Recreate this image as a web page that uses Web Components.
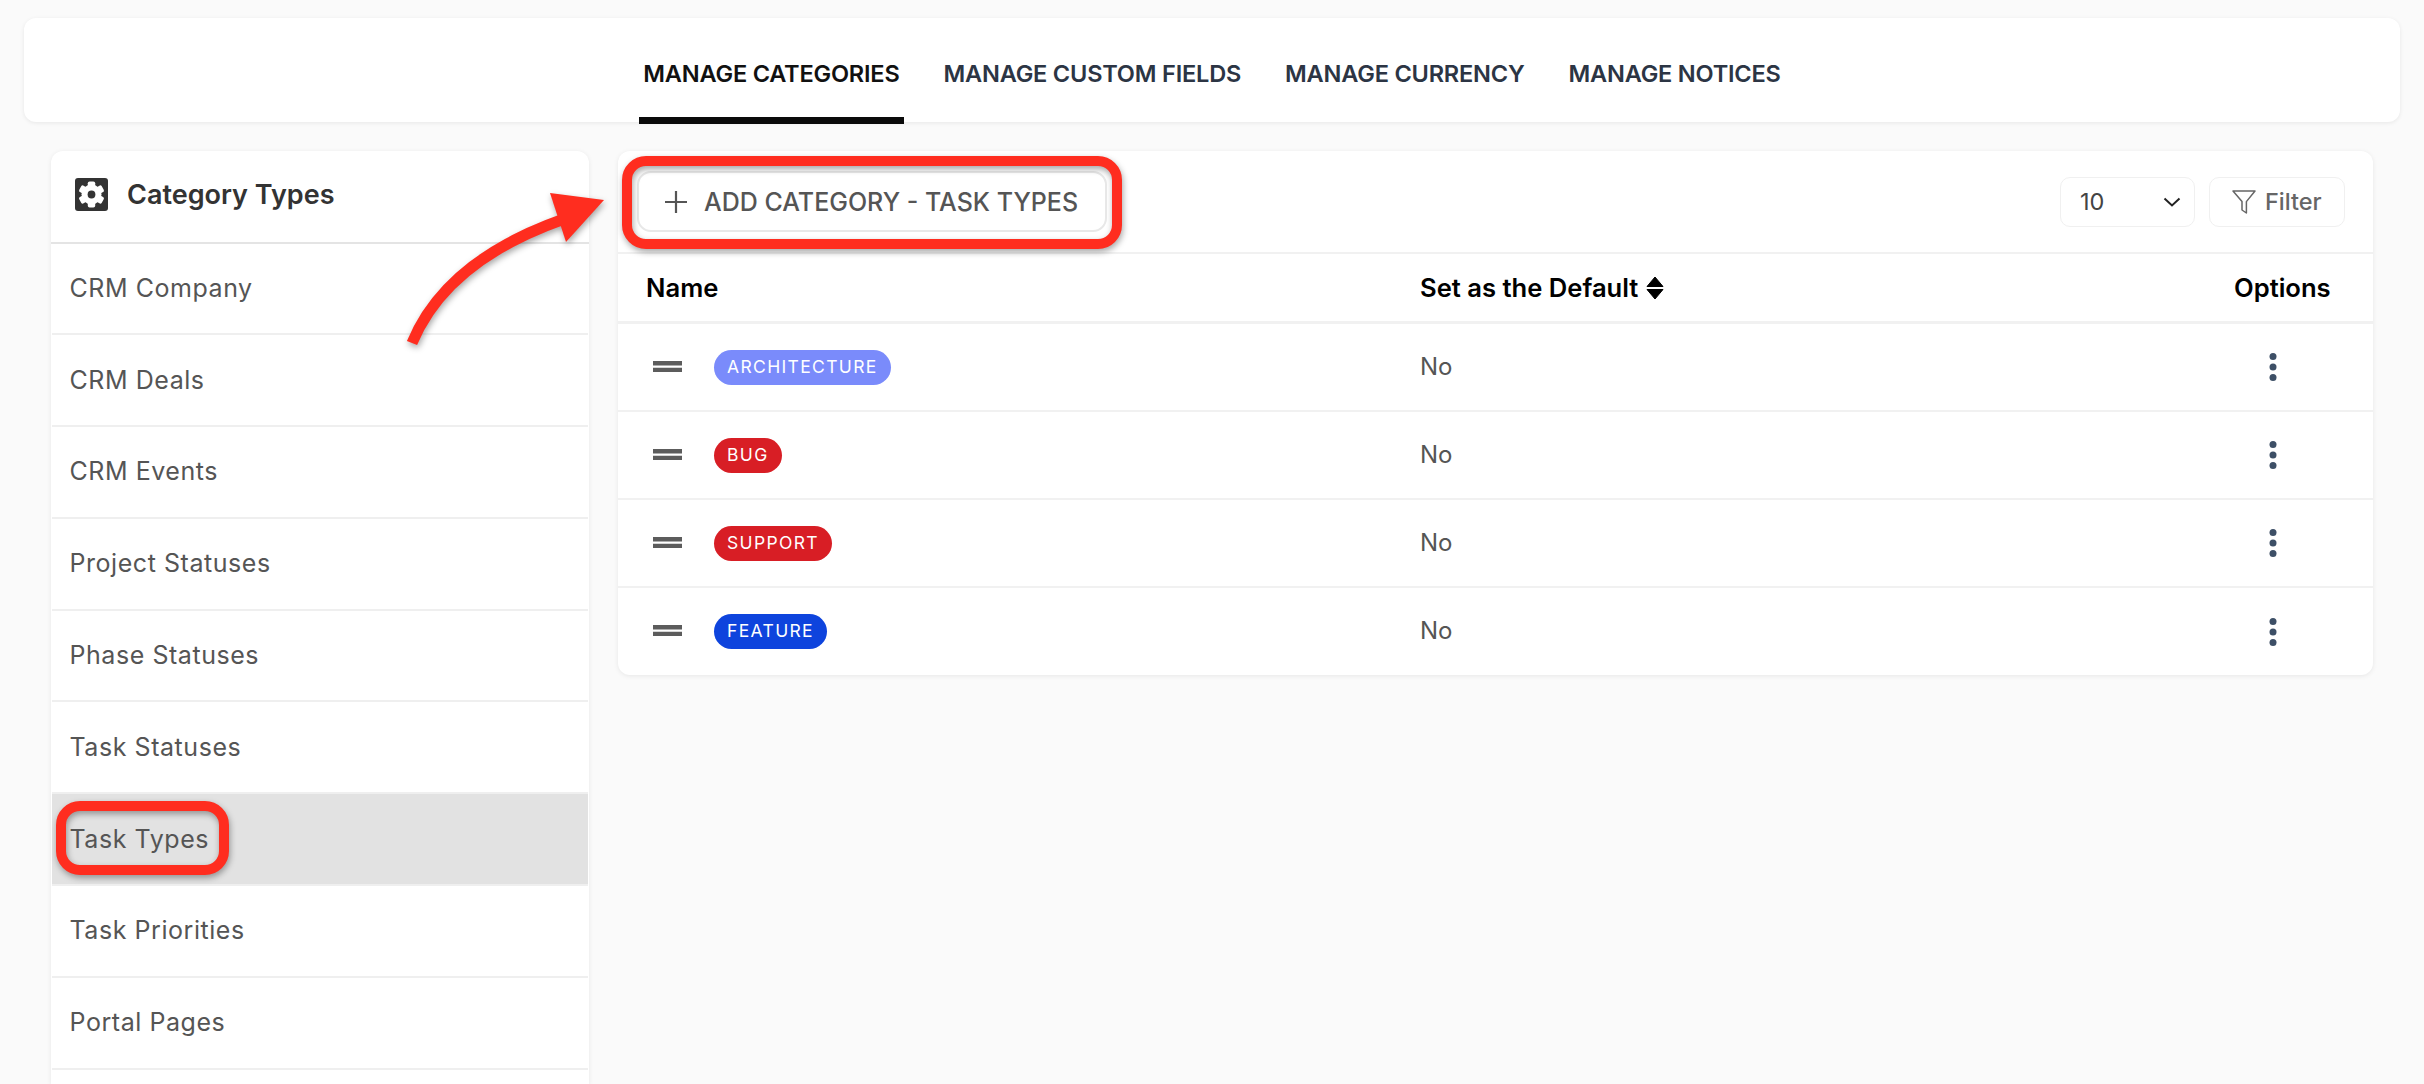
<!DOCTYPE html>
<html>
<head>
<meta charset="utf-8">
<title>Manage Categories</title>
<style>
  html, body { margin: 0; height: 100%; overflow: hidden; }
  body {
    position: relative;
    background: #fafafa;
    font-family: Inter, "Liberation Sans", sans-serif;
    color: #555;
    box-sizing: border-box;
    padding: 18px 24px 0;
  }
</style>
</head>
<body>

<tab-bar>
  <tab-item active>MANAGE CATEGORIES</tab-item>
  <tab-item>MANAGE CUSTOM FIELDS</tab-item>
  <tab-item>MANAGE CURRENCY</tab-item>
  <tab-item>MANAGE NOTICES</tab-item>
</tab-bar>

<page-columns>
  <side-panel slot="side" heading="Category Types">
    <side-item>CRM Company</side-item>
    <side-item>CRM Deals</side-item>
    <side-item>CRM Events</side-item>
    <side-item>Project Statuses</side-item>
    <side-item>Phase Statuses</side-item>
    <side-item>Task Statuses</side-item>
    <side-item active>Task Types</side-item>
    <side-item>Task Priorities</side-item>
    <side-item>Portal Pages</side-item>
  </side-panel>

  <category-table>
    <category-row color="#7a8bfb" default="No">ARCHITECTURE</category-row>
    <category-row color="#d81e25" default="No">BUG</category-row>
    <category-row color="#d81e25" default="No">SUPPORT</category-row>
    <category-row color="#0e44dd" default="No">FEATURE</category-row>
  </category-table>
</page-columns>

<annotation-layer></annotation-layer>

<script>
/* Top tabs */
class TabBar extends HTMLElement {
  constructor() {
    super();
    this.attachShadow({mode: 'open'}).innerHTML = `
      <style>
        :host {
          display: flex;
          justify-content: center;
          height: 104px;
          gap: 36px;
          background: #fff;
          border-radius: 12px;
          box-shadow: 0 1px 4px rgba(0,0,0,.08);
        }
      </style>
      <slot></slot>`;
  }
}
customElements.define('tab-bar', TabBar);

class TabItem extends HTMLElement {
  constructor() {
    super();
    this.attachShadow({mode: 'open'}).innerHTML = `
      <style>
        :host {
          display: block;
          box-sizing: border-box;
          height: 106px;
          padding: 3px 4px 0;
          line-height: 106px;
          font-size: 23.55px;
          font-weight: 600;
          letter-spacing: -0.2px;
          color: #2c3544;
          white-space: nowrap;
          border-bottom: 7px solid transparent;
        }
        :host([active]) { color: #111; border-bottom-color: #0a0a0a; }
      </style>
      <slot></slot>`;
  }
}
customElements.define('tab-item', TabItem);

/* Two column area under the tabs */
class PageColumns extends HTMLElement {
  constructor() {
    super();
    this.attachShadow({mode: 'open'}).innerHTML = `
      <style>
        :host {
          display: grid;
          grid-template-columns: 538px 1fr;
          gap: 29px;
          align-items: start;
          margin: 29px 27px 0;
        }
      </style>
      <slot name="side"></slot>
      <slot></slot>`;
  }
}
customElements.define('page-columns', PageColumns);

/* Left list */
class SidePanel extends HTMLElement {
  constructor() {
    super();
    this.attachShadow({mode: 'open'}).innerHTML = `
      <style>
        :host {
          display: block;
          height: 933px;
          overflow: hidden;
          background: #fff;
          border-radius: 12px 12px 0 0;
          box-shadow: 0 1px 5px rgba(0,0,0,.08);
        }
        header {
          display: flex;
          align-items: center;
          gap: 19px;
          box-sizing: border-box;
          height: 92.5px;
          padding: 0 0 3px 24px;
          border-bottom: 2px solid #e4e4e4;
          font-size: 27px;
          font-weight: 600;
          color: #333;
        }
        svg { display: block; }
      </style>
      <header>
        <svg width="33" height="33" viewBox="0 0 33 33">
          <rect width="33" height="33" rx="3" fill="#333"/>
          <g fill="#fff" transform="translate(16.5 16.5)">
            <circle r="10"/>
            <rect x="-3.7" y="-13" width="7.4" height="26" rx="1.8"/>
            <rect x="-3.7" y="-13" width="7.4" height="26" rx="1.8" transform="rotate(60)"/>
            <rect x="-3.7" y="-13" width="7.4" height="26" rx="1.8" transform="rotate(120)"/>
          </g>
          <circle cx="16.5" cy="16.5" r="3.9" fill="#333"/>
        </svg>
        <span id="title"></span>
      </header>
      <slot></slot>`;
  }

  connectedCallback() {
    this.shadowRoot.querySelector('#title').textContent = this.getAttribute('heading');
  }
}
customElements.define('side-panel', SidePanel);

class SideItem extends HTMLElement {
  constructor() {
    super();
    this.attachShadow({mode: 'open'}).innerHTML = `
      <style>
        :host {
          display: flex;
          align-items: center;
          box-sizing: border-box;
          height: 91.8px;
          margin: 0 1px;
          padding: 0 0 1px 17.5px;
          border-bottom: 2px solid #efefef;
          font-size: 25px;
          letter-spacing: 0.55px;
          color: #555;
        }
        :host([active]) { background: #e2e2e2; }
      </style>
      <slot></slot>`;
  }
}
customElements.define('side-item', SideItem);

/* Right table */
class CategoryTable extends HTMLElement {
  constructor() {
    super();
    this.attachShadow({mode: 'open'}).innerHTML = `
      <style>
        :host {
          display: block;
          background: #fff;
          border-radius: 12px;
          box-shadow: 0 1px 5px rgba(0,0,0,.08);
        }
        .toolbar {
          display: flex;
          align-items: center;
          box-sizing: border-box;
          height: 103px;
          padding: 0 28px 0 19px;
          border-bottom: 2px solid #f1f1f1;
        }
        .add {
          display: flex;
          align-items: center;
          gap: 16px;
          box-sizing: border-box;
          width: 470px;
          height: 61px;
          padding-left: 25px;
          border: 2px solid #e8e8e8;
          border-radius: 14px;
          font-size: 25px;
          font-weight: 500;
          color: #555;
          white-space: nowrap;
        }
        .size, .filter {
          display: flex;
          align-items: center;
          box-sizing: border-box;
          height: 50px;
          border: 1.5px solid #f0f0f0;
          border-radius: 10px;
          font-size: 23.5px;
        }
        .size {
          justify-content: space-between;
          width: 135px;
          margin-left: auto;
          padding: 0 13px 0 19px;
          color: #444;
        }
        .filter {
          gap: 9px;
          width: 136px;
          margin-left: 14px;
          padding-left: 22px;
          font-weight: 500;
          color: #666;
        }
        .head {
          display: grid;
          grid-template-columns: 802px 1fr 139px;
          align-items: center;
          box-sizing: border-box;
          height: 70px;
          padding: 0 0 0 28px;
          border-bottom: 3px solid #f1f1f1;
          font-size: 25.6px;
          font-weight: 600;
          color: #000;
        }
        .sort { display: flex; align-items: center; gap: 8px; margin-left: -28px; }
        svg { display: block; }
      </style>
      <div class="toolbar">
        <div class="add">
          <svg width="24" height="24" viewBox="0 0 24 24"><path d="M12 1v22M1 12h22" stroke="#555" stroke-width="2.2" fill="none"/></svg>
          <span>ADD CATEGORY - TASK TYPES</span>
        </div>
        <div class="size">
          <span>10</span>
          <svg width="18" height="10" viewBox="0 0 18 10"><path d="M1.5 1.5L9 8.5l7.5-7" stroke="#222" stroke-width="2" fill="none"/></svg>
        </div>
        <div class="filter">
          <svg width="24" height="24" viewBox="0 0 24 24"><path d="M1 1h22l-8.6 10.6V23l-4.4-3V11.6z" stroke="#666" stroke-width="1.5" fill="none" stroke-linejoin="round"/></svg>
          <span>Filter</span>
        </div>
      </div>
      <div class="head">
        <span>Name</span>
        <span class="sort">Set as the Default
          <svg width="18" height="22" viewBox="0 0 18 22"><path d="M9 0l8 9.5H1zM9 22l-8-9.5h16z" fill="#000" stroke="#000" stroke-linejoin="round"/></svg>
        </span>
        <span>Options</span>
      </div>
      <slot></slot>`;
  }
}
customElements.define('category-table', CategoryTable);

class CategoryRow extends HTMLElement {
  constructor() {
    super();
    this.attachShadow({mode: 'open'}).innerHTML = `
      <style>
        :host {
          display: grid;
          grid-template-columns: 802px 1fr 139px;
          align-items: center;
          box-sizing: border-box;
          height: 88px;
          border-bottom: 2px solid #f1f1f1;
          font-size: 24px;
          color: #555;
        }
        :host(:last-child) { border-bottom: 0; height: 87px; }
        .name { display: flex; align-items: center; gap: 32px; padding-left: 35px; }
        .handle { position: relative; top: -1px; }
        .badge {
          box-sizing: border-box;
          height: 35px;
          padding: 0 13px;
          line-height: 34px;
          border-radius: 18px;
          font-size: 17.5px;
          font-weight: 400;
          letter-spacing: 1.35px;
          color: #fff;
        }
        #def { padding-bottom: 2px; }
        .dots { margin-left: 35px; }
        svg { display: block; }
      </style>
      <div class="name">
        <svg class="handle" width="29" height="11" viewBox="0 0 29 11"><path d="M0 0h29v4.5H0zM0 6.7h29v4.3H0z" fill="#5c5c5c"/></svg>
        <span class="badge"><slot></slot></span>
      </div>
      <span id="def"></span>
      <svg class="dots" width="8" height="28" viewBox="0 0 8 28"><g fill="#3d4f66"><circle cx="4" cy="3.5" r="3.5"/><circle cx="4" cy="14" r="3.5"/><circle cx="4" cy="24.5" r="3.5"/></g></svg>`;
  }

  connectedCallback() {
    this.shadowRoot.querySelector('.badge').style.background = this.getAttribute('color');
    this.shadowRoot.querySelector('#def').textContent = this.getAttribute('default');
  }
}
customElements.define('category-row', CategoryRow);

/* Red marks drawn on top of the screenshot */
class AnnotationLayer extends HTMLElement {
  constructor() {
    super();
    this.attachShadow({mode: 'open'}).innerHTML = `
      <style>
        :host { position: absolute; left: 0; top: 0; width: 2424px; height: 1084px; pointer-events: none; }
        svg { display: block; filter: drop-shadow(1px 3px 3px rgba(0,0,0,.35)); }
      </style>
      <svg width="2424" height="1084" viewBox="0 0 2424 1084" fill="none">
        <rect x="627" y="161" width="490" height="83" rx="19" stroke="#ff2d1f" stroke-width="10"/>
        <rect x="61" y="806" width="163" height="64" rx="19" stroke="#ff2d1f" stroke-width="10"/>
        <path d="M412 343C436 285 490 245 564 219" stroke="#ff2d1f" stroke-width="11"/>
        <path d="M550 193L604 200L566 242z" fill="#ff2d1f"/>
      </svg>`;
  }
}
customElements.define('annotation-layer', AnnotationLayer);
</script>
</body>
</html>
